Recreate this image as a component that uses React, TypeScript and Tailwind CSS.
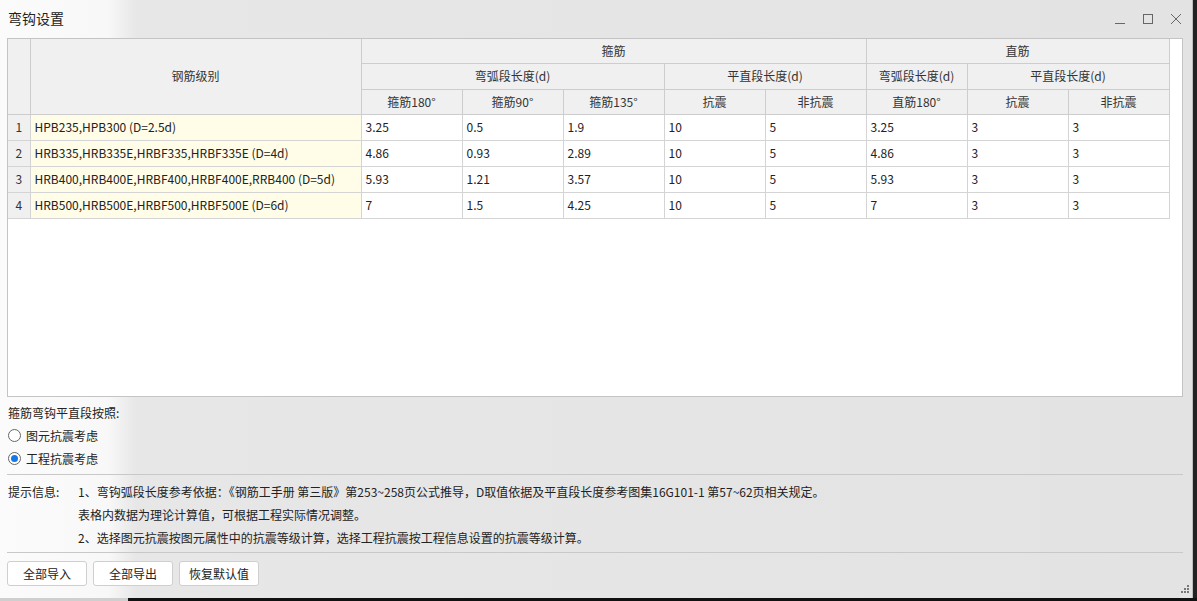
import React, { useState } from "react";

const FONT = { fontFamily: '"Microsoft YaHei", "Noto Sans CJK SC", sans-serif' };

interface HookRow {
  grade: string;
  vals: string[];
}

const rows: HookRow[] = [
  { grade: "HPB235,HPB300 (D=2.5d)", vals: ["3.25", "0.5", "1.9", "10", "5", "3.25", "3", "3"] },
  { grade: "HRB335,HRB335E,HRBF335,HRBF335E (D=4d)", vals: ["4.86", "0.93", "2.89", "10", "5", "4.86", "3", "3"] },
  { grade: "HRB400,HRB400E,HRBF400,HRBF400E,RRB400 (D=5d)", vals: ["5.93", "1.21", "3.57", "10", "5", "5.93", "3", "3"] },
  { grade: "HRB500,HRB500E,HRBF500,HRBF500E (D=6d)", vals: ["7", "1.5", "4.25", "10", "5", "7", "3", "3"] },
];

const th = "border-r border-b border-[#cdcdcd] bg-[#f0f0f0] font-normal text-[#333] text-center";
const td = "border-r border-b border-[#d4d4d4] text-left pl-[4px] text-[#222]";

const Radio = ({ checked }: { checked: boolean }) => (
  <span className="w-[13px] h-[13px] rounded-full border border-[#666] bg-white flex items-center justify-center">
    {checked && <span className="w-[7px] h-[7px] rounded-full bg-[#1677e6]" />}
  </span>
);

const App: React.FC = () => {
  const [mode, setMode] = useState<number>(1);

  return (
    <div className="w-[1197px] h-[601px] flex flex-col overflow-hidden bg-[#1a1a1a]" style={FONT}>
      <div className="flex h-[598px]">
        {/* window */}
        <div className="w-[1193px] h-full flex flex-col bg-[linear-gradient(to_right,#fbfbfb_0px,#f8f8f8_108px,#e7e7e7_136px,#e3e3e3_100%)] border-r border-[#bdbdbd]">
          {/* title bar */}
          <div className="h-[38px] flex items-center justify-between">
            <span className="pl-[8px] text-[14px] text-[#222] pb-[2px]">弯钩设置</span>
            <div className="flex items-center gap-[16px] pr-[10px] text-[#666]">
              <svg width="12" height="12" viewBox="0 0 12 12">
                <path d="M1 10.5h10" stroke="#666" strokeWidth="1" />
              </svg>
              <svg width="12" height="12" viewBox="0 0 12 12">
                <rect x="1.5" y="1.5" width="9" height="9" fill="none" stroke="#666" strokeWidth="1" />
              </svg>
              <svg width="12" height="12" viewBox="0 0 12 12">
                <path d="M1 1l10 10M11 1L1 11" stroke="#666" strokeWidth="1" />
              </svg>
            </div>
          </div>

          {/* table */}
          <div className="ml-[7px] w-[1176px] h-[359px] border border-[#c4c4c4] bg-white text-[12px]">
            <table className="table-fixed border-collapse w-[1161px]">
              <colgroup>
                <col className="w-[22px]" />
                <col className="w-[331px]" />
                {Array.from({ length: 8 }).map((_, i) => (
                  <col key={i} className="w-[101px]" />
                ))}
              </colgroup>
              <thead>
                <tr className="h-[24px]">
                  <th rowSpan={3} className={th}></th>
                  <th rowSpan={3} className={th}>钢筋级别</th>
                  <th colSpan={5} className={th}>箍筋</th>
                  <th colSpan={3} className={th}>直筋</th>
                </tr>
                <tr className="h-[26px]">
                  <th colSpan={3} className={th}>弯弧段长度(d)</th>
                  <th colSpan={2} className={th}>平直段长度(d)</th>
                  <th className={th}>弯弧段长度(d)</th>
                  <th colSpan={2} className={th}>平直段长度(d)</th>
                </tr>
                <tr className="h-[25px]">
                  <th className={th}>箍筋180°</th>
                  <th className={th}>箍筋90°</th>
                  <th className={th}>箍筋135°</th>
                  <th className={th}>抗震</th>
                  <th className={th}>非抗震</th>
                  <th className={th}>直筋180°</th>
                  <th className={th}>抗震</th>
                  <th className={th}>非抗震</th>
                </tr>
              </thead>
              <tbody>
                {rows.map((r, i) => (
                  <tr key={i} className="h-[26px]">
                    <td className="border-r border-b border-[#d4d4d4] bg-[#f0f0f0] text-center text-[#333]">{i + 1}</td>
                    <td className={`${td} bg-[#fffde8]`}>{r.grade}</td>
                    {r.vals.map((v, j) => (
                      <td key={j} className={td}>{v}</td>
                    ))}
                  </tr>
                ))}
              </tbody>
            </table>
          </div>

          {/* options */}
          <div className="pt-[4px] pl-[8px] flex flex-col text-[12px] text-[#222]">
            <div className="h-[23px] flex items-center">箍筋弯钩平直段按照:</div>
            <label className="h-[23px] flex items-center gap-[5px] cursor-pointer" onClick={() => setMode(0)}>
              <Radio checked={mode === 0} />
              <span>图元抗震考虑</span>
            </label>
            <label className="h-[23px] flex items-center gap-[5px] cursor-pointer" onClick={() => setMode(1)}>
              <Radio checked={mode === 1} />
              <span>工程抗震考虑</span>
            </label>
          </div>

          <div className="mt-[4px] ml-[7px] w-[1176px] h-px bg-[#c8c8c8]" />

          {/* tips */}
          <div className="pt-[5px] pl-[8px] flex text-[12px] text-[#222]">
            <div className="w-[70px] h-[23px] flex items-center">提示信息:</div>
            <div className="flex flex-col">
              <div className="h-[23px] flex items-center">
                1、弯钩弧段长度参考依据：《钢筋工手册 第三版》第253~258页公式推导，D取值依据及平直段长度参考图集16G101-1 第57~62页相关规定。
              </div>
              <div className="h-[23px] flex items-center">表格内数据为理论计算值，可根据工程实际情况调整。</div>
              <div className="h-[23px] flex items-center">
                2、选择图元抗震按图元属性中的抗震等级计算，选择工程抗震按工程信息设置的抗震等级计算。
              </div>
            </div>
          </div>

          <div className="mt-[3px] ml-[7px] w-[1176px] h-px bg-[#c8c8c8]" />

          {/* buttons */}
          <div className="mt-[8px] pl-[7px] pr-[2px] flex items-end justify-between">
            <div className="flex gap-[6px] text-[12px] text-[#222]">
              <button className="w-[80px] h-[25px] bg-white border border-[#cfcfcf] rounded-[3px]">全部导入</button>
              <button className="w-[80px] h-[25px] bg-white border border-[#cfcfcf] rounded-[3px]">全部导出</button>
              <button className="w-[80px] h-[25px] bg-white border border-[#cfcfcf] rounded-[3px]">恢复默认值</button>
            </div>
            <svg width="9" height="9" viewBox="0 0 9 9" className="mb-[-8px]">
              <rect x="6" y="0" width="2" height="2" fill="#777" />
              <rect x="3" y="3" width="2" height="2" fill="#777" />
              <rect x="6" y="3" width="2" height="2" fill="#777" />
              <rect x="0" y="6" width="2" height="2" fill="#777" />
              <rect x="3" y="6" width="2" height="2" fill="#777" />
              <rect x="6" y="6" width="2" height="2" fill="#777" />
            </svg>
          </div>
        </div>
        <div className="flex-1 bg-[#222]" />
      </div>
      {/* outside window strip */}
      <div className="h-[3px] flex">
        <div className="w-[128px] bg-[#cfcfcf]" />
        <div className="flex-1 bg-[#111]" />
      </div>
    </div>
  );
};

export default App;
